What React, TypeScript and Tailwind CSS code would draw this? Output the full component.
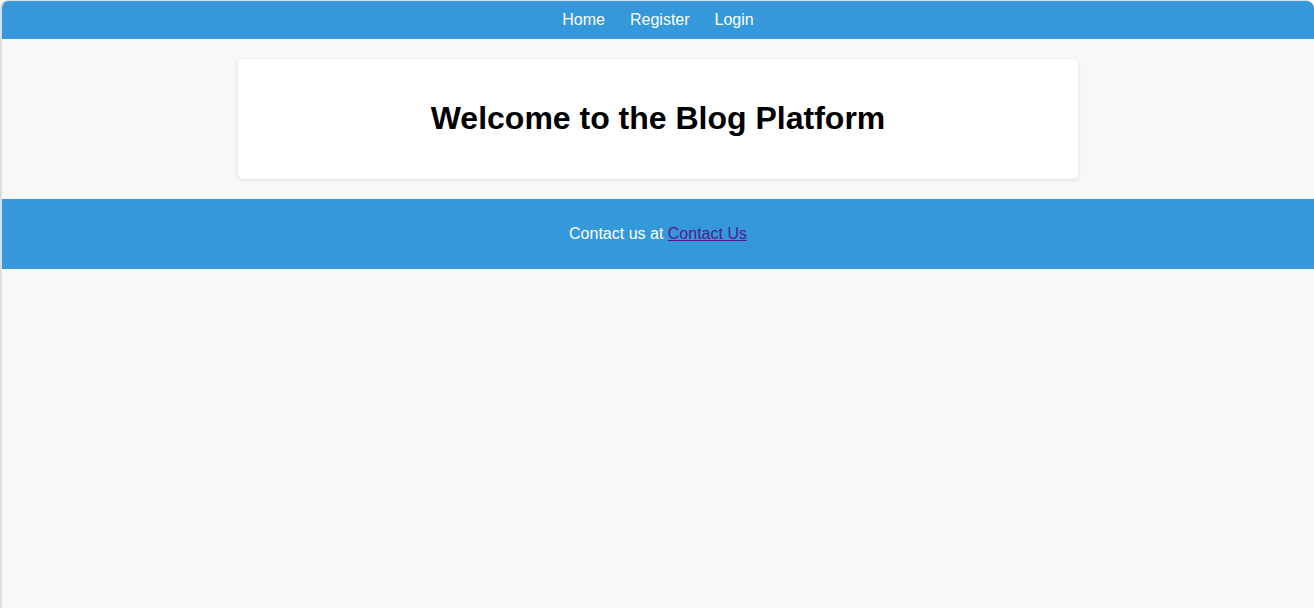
import React from "react";

export default function App() {
	const links = ["Home", "Register", "Login"];

	return (
		<div className="min-h-[608px] bg-white font-['Liberation_Sans',Arial,sans-serif]">
			<div className="min-h-[608px] border-l-2 border-t border-[#dedede] rounded-t-lg overflow-hidden bg-[#f8f8f8]">
				{/* Nav */}
				<nav className="h-[38px] bg-[#3498db] flex items-center justify-center">
					{links.map((l) => (
						<a key={l} href="#" className="mx-[12.5px] text-white text-base leading-[18px] no-underline">
							{l}
						</a>
					))}
				</nav>

				{/* Main */}
				<main className="pt-5">
					<div className="w-[840px] mx-auto bg-white rounded-[5px] p-5 shadow-[0_1px_4px_rgba(0,0,0,0.12)]">
						<h1 className="my-[21.44px] text-[32px] leading-[37px] font-bold text-black text-center">
							Welcome to the Blog Platform
						</h1>
					</div>
				</main>

				{/* Footer */}
				<footer className="mt-5 h-[70px] bg-[#3498db] flex items-center justify-center text-white text-base">
					<p>
						Contact us at{" "}
						<a href="#" className="text-[#551a8b] underline">
							Contact Us
						</a>
					</p>
				</footer>
			</div>
		</div>
	);
}
